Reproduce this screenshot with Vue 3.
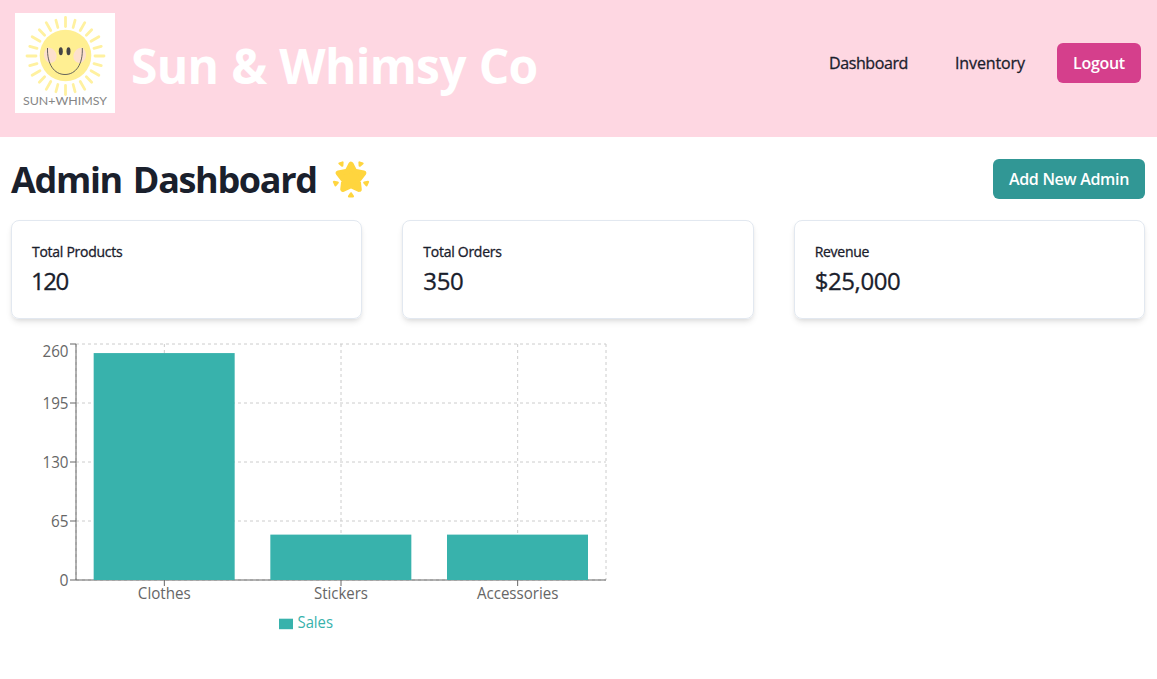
<script setup>
const stats = [
  { label: 'Total Products', value: '120', cls: 'products' },
  { label: 'Total Orders', value: '350', cls: 'orders' },
  { label: 'Revenue', value: '$25,000', cls: 'revenue' },
]

const plot = { left: 65, right: 595, top: 5, bottom: 241 }
const max = 260
const yOf = (v) => plot.bottom - (v / max) * (plot.bottom - plot.top)
const band = (plot.right - plot.left) / 3

const ticks = [
  { value: 0, dy: 5.5, w: 9 },
  { value: 65, dy: 5.5, w: 17.5 },
  { value: 130, dy: 5.5, w: 26 },
  { value: 195, dy: 5.5, w: 26 },
  { value: 260, dy: 13, w: 26 },
].map((t) => ({ ...t, y: yOf(t.value) }))

const bars = [
  { name: 'Clothes', sales: 250, w: 53 },
  { name: 'Stickers', sales: 50, w: 54 },
  { name: 'Accessories', sales: 50, w: 81.5 },
].map((b, i) => ({
  ...b,
  cx: plot.left + band * (i + 0.5),
  x: plot.left + band * (i + 0.1),
  y: yOf(b.sales),
  height: plot.bottom - yOf(b.sales),
}))

const rays = Array.from({ length: 24 }, (_, i) => ({ angle: i * 15, end: i % 2 ? 38 : 39.5 }))
</script>

<template>
  <div class="page">
    <header class="topbar">
      <div class="brand">
        <svg class="logo" viewBox="0 0 100 100">
          <rect width="100" height="100" fill="#fff" />
          <g stroke="#fff1a0" stroke-width="2.8" stroke-linecap="round">
            <line
              v-for="r in rays"
              :key="r.angle"
              x1="50.5"
              :y1="43 - 29.5"
              x2="50.5"
              :y2="43 - r.end + 1"
              :transform="`rotate(${r.angle} 50.5 43)`"
            />
          </g>
          <circle cx="50.5" cy="42.5" r="25.8" fill="#ffef92" />
          <path d="M32.7 34.5a9 9 0 0 0 1 15.2c7 1.5 10.500-6.500 5.800-12-1.500-2-4.300-3.200-6.800-3.200z" fill="#fde0cd" />
          <path d="M67.300 34.500a9 9 0 0 1 -1 15.200c-7 1.500-10.500-6.500-5.800-12 1.500-2 4.300-3.200 6.800-3.200z" fill="#fde0cd" />
          <ellipse cx="45.800" cy="38.300" rx="2" ry="4" fill="#454545" />
          <ellipse cx="53.500" cy="38.300" rx="2" ry="4" fill="#454545" />
          <path d="M32.500 35C32 51 39 61.500 50 61.500S68 51 67.300 35" fill="none" stroke="#555" stroke-width=".9" />
          <text x="8" y="92.200" textLength="84" lengthAdjust="spacingAndGlyphs" class="logo-text">SUN+WHIMSY</text>
        </svg>
        <h1>Sun &amp; Whimsy Co</h1>
      </div>
      <nav>
        <a class="link dash">Dashboard</a>
        <a class="link inv">Inventory</a>
        <button class="btn logout">Logout</button>
      </nav>
    </header>

    <main>
      <div class="title-row">
        <h2>
          <span>Admin Dashboard</span>
          <svg class="star" viewBox="0 0 36 36">
            <g fill="#ffd53e" stroke="#ffd53e" stroke-linejoin="round">
              <path stroke-width="5" d="M18 4l3.500 6.800 8.500 1.700-5.300 6.700 1 8.500-7.700-3.400-7.700 3.400 1-8.500-5.300-6.700 8.500-1.700z" />
              <g stroke-width="2">
                <path d="M7 3.300L10 2.300 9.800 5.500z" />
                <path d="M29 3.300L26 2.300 26.200 5.500z" />
                <path d="M1.800 20.700L5.500 21.300 3.300 24z" />
                <path d="M34.200 20.700L30.500 21.300 32.700 24z" />
                <path d="M18 31.500L19.900 34.500H16.100z" />
              </g>
            </g>
          </svg>
        </h2>
        <button class="btn add">Add New Admin</button>
      </div>

      <section class="stats">
        <article v-for="s in stats" :key="s.label" class="card" :class="s.cls">
          <div class="label">{{ s.label }}</div>
          <div class="value">{{ s.value }}</div>
        </article>
      </section>

      <svg class="chart" width="600" height="300" viewBox="0 0 600 300">
        <g stroke="#ccc" stroke-dasharray="3 3">
          <line v-for="t in ticks" :key="t.value" :x1="plot.left" :x2="plot.right" :y1="t.y" :y2="t.y" />
          <line v-for="b in bars" :key="b.name" :x1="b.cx" :x2="b.cx" :y1="plot.top" :y2="plot.bottom" />
          <line :x1="plot.left" :x2="plot.left" :y1="plot.top" :y2="plot.bottom" />
          <line :x1="plot.right" :x2="plot.right" :y1="plot.top" :y2="plot.bottom" />
        </g>
        <g stroke="#666">
          <line :x1="plot.left" :x2="plot.right" :y1="plot.bottom" :y2="plot.bottom" />
          <line :x1="plot.left" :x2="plot.left" :y1="plot.top" :y2="plot.bottom" />
          <line v-for="t in ticks" :key="t.value" :x1="plot.left - 6" :x2="plot.left" :y1="t.y" :y2="t.y" />
          <line v-for="b in bars" :key="b.name" :x1="b.cx" :x2="b.cx" :y1="plot.bottom" :y2="plot.bottom + 6" />
        </g>
        <rect v-for="b in bars" :key="b.name" :x="b.x" :y="b.y" width="141" :height="b.height" fill="#38b2ac" />
        <g class="axis-text">
          <text
            v-for="t in ticks"
            :key="t.value"
            :x="57.500 - t.w"
            :y="t.y + t.dy"
            :textLength="t.w"
            lengthAdjust="spacingAndGlyphs"
          >{{ t.value }}</text>
          <text
            v-for="b in bars"
            :key="b.name"
            :x="b.cx - b.w / 2"
            y="260"
            :textLength="b.w"
            lengthAdjust="spacingAndGlyphs"
          >{{ b.name }}</text>
          <rect x="268" y="279.700" width="14" height="10.500" fill="#38b2ac" />
          <text x="286.500" y="289" textLength="35.500" lengthAdjust="spacingAndGlyphs" class="legend">Sales</text>
        </g>
      </svg>
    </main>
  </div>
</template>

<style>
body {
  background: #fff;
}
</style>

<style scoped>
.page {
  height: 679px;
  overflow: hidden;
  font-family: 'Segoe UI', 'Open Sans', 'Noto Sans', sans-serif;
  color: #1a202c;
}
.topbar {
  box-sizing: border-box;
  height: 137px;
  padding: 13px 16px 24px 15px;
  background: #fed7e2;
  display: flex;
  justify-content: space-between;
}
.brand {
  display: flex;
  gap: 16px;
}
.logo {
  width: 100px;
  height: 100px;
}
.logo-text {
  font: 12px 'Lato', sans-serif;
  fill: #858585;
}
h1,
h2 {
  margin: 0;
  font-weight: 700;
  white-space: nowrap;
}
h1 {
  font-size: 48px;
  line-height: 58px;
  letter-spacing: -0.75px;
  word-spacing: 1.2px;
  margin-top: 24px;
  color: #fff;
}
nav {
  display: flex;
  align-items: center;
}
.link {
  font-size: 16px;
  line-height: 24px;
  font-weight: 500;
  white-space: nowrap;
}
.link,
.label,
.value {
  -webkit-text-stroke: 0.3px currentColor;
}
.dash {
  width: 78px;
  margin-right: 48px;
  letter-spacing: -0.4px;
}
.inv {
  width: 70px;
  margin-right: 32px;
  letter-spacing: -0.12px;
}
.btn {
  height: 40px;
  border: 0;
  padding: 1px 0 0;
  border-radius: 6px;
  color: #fff;
  font-family: inherit;
  font-size: 16px;
  font-weight: 600;
  line-height: 19px;
  letter-spacing: -0.3px;
  white-space: nowrap;
}
.logout {
  width: 84px;
  background: #d53f8c;
}
.add {
  width: 152px;
  background: #319795;
}
main {
  padding: 22px 12px 0 11px;
}
.title-row {
  display: flex;
  justify-content: space-between;
  align-items: center;
  height: 40px;
}
h2 {
  display: flex;
  align-items: center;
  font-size: 36px;
  line-height: 43px;
}
h2 span {
  width: 321px;
  letter-spacing: -1.35px;
  word-spacing: 3px;
}
.star {
  width: 38px;
  height: 38px;
}
.stats {
  margin-top: 21px;
  display: grid;
  grid-template-columns: repeat(3, 1fr);
  gap: 40px;
}
.card {
  box-sizing: border-box;
  height: 99px;
  border: 1px solid #e2e8f0;
  border-radius: 8px;
  padding: 20px;
  box-shadow: 0 4px 6px -1px rgba(0, 0, 0, 0.1), 0 2px 4px -1px rgba(0, 0, 0, 0.06);
}
.label {
  font-size: 14px;
  line-height: 21px;
  font-weight: 500;
  letter-spacing: -0.27px;
}
.value {
  font-size: 24px;
  line-height: 38px;
  font-weight: 500;
  letter-spacing: -0.4px;
}
.products .value {
  letter-spacing: -1.5px;
  margin-left: -1px;
}
.chart {
  display: block;
  margin-top: 20px;
}
.axis-text {
  font-size: 16px;
  fill: #666;
}
.legend {
  fill: #38b2ac;
}
</style>
